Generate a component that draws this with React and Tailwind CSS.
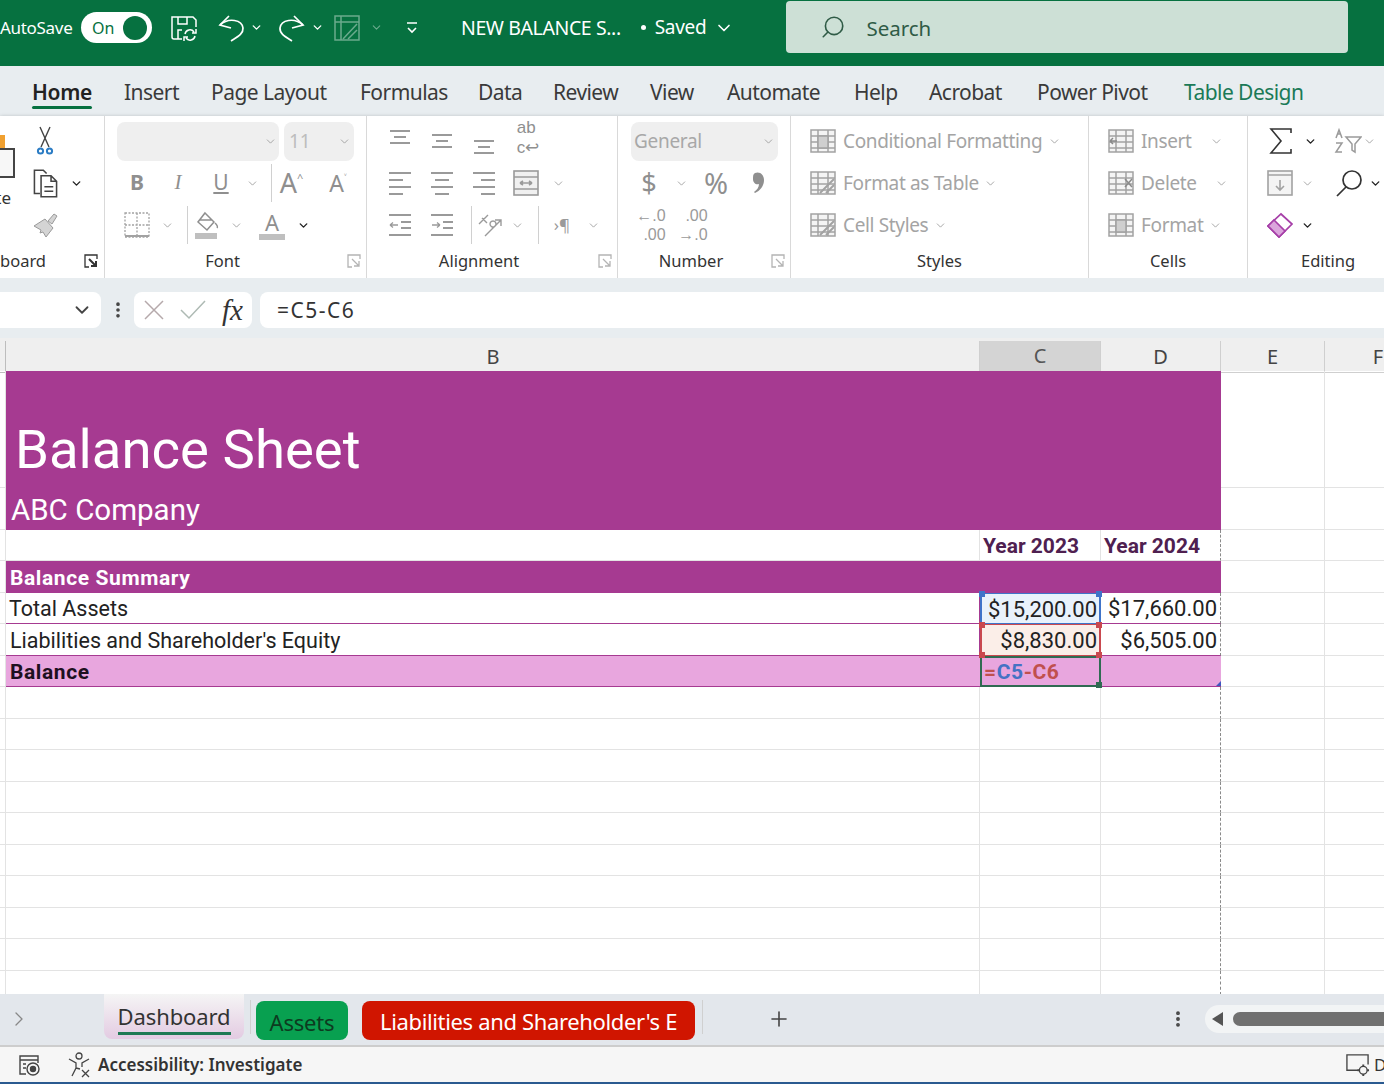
import React from "react";
import {
  ChevronDown,
  ChevronRight,
  EllipsisVertical,
  Plus,
  Search,
} from "lucide-react";

// one fixed-width cell of a ribbon row, centres whatever is inside
const S = ({ c = "", children }) => (
  <span className={"flex flex-none items-center justify-center " + c}>{children}</span>
);

const Chev = ({ dark }) => (
  <ChevronDown size={13} strokeWidth={dark ? 2.6 : 1.7} color={dark ? "#222" : "#a0a0a0"} />
);

const Sep = ({ c = "" }) => <span className={"w-px flex-none bg-[#d0d0d0] " + c} />;

const Lines = ({ rows, children }) => (
  <svg width="26" height="26" viewBox="0 0 26 26" fill="none" stroke="#9a9a9a" strokeWidth="2">
    {rows.map((r, i) => (
      <line key={i} x1={r[0]} x2={r[1]} y1={r[2]} y2={r[2]} />
    ))}
    {children}
  </svg>
);

const Launcher = ({ dark }) => (
  <svg width="14" height="14" viewBox="0 0 14 14" fill="none" stroke={dark ? "#333" : "#b4b4b4"} strokeWidth="1.3">
    <path d="M13 5V1H1v12h4" />
    <path d="M5 5l7 7M12 7v5H7" strokeWidth={dark ? 2 : 1.3} />
  </svg>
);

const GridIcon = ({ children }) => (
  <svg width="26" height="26" viewBox="0 0 26 26" fill="none" stroke="#a2a2a2" strokeWidth="1.5">
    <rect x="1" y="2" width="24" height="22" fill="#f4f4f4" />
    <path d="M1 8h24M1 14h24M1 20h24M8 2v22M18 2v22" />
    {children}
  </svg>
);

const Group = ({ w, label, launcher, dark, children }) => (
  <div className={"flex h-full flex-none flex-col border-r border-[#d9d9d9] " + w}>
    <div className="flex h-[131px] flex-col pt-[4px]">{children}</div>
    <div
      className={
        "relative flex h-[28px] items-center justify-center text-[16.5px] text-[#333] " +
        (launcher ? "pr-[26px]" : "")
      }
    >
      {label}
      {launcher && (
        <span className="absolute right-[5px] top-[7px]">
          <Launcher dark={dark} />
        </span>
      )}
    </div>
  </div>
);

const RRow = ({ children }) => <div className="flex h-[42px] flex-none items-center">{children}</div>;

const tabs = [
  ["Home", "w-[92px] pl-[32px]"],
  ["Insert", "w-[119px] pl-[32px]"],
  ["Page Layout", "w-[149px] pl-[0px]"],
  ["Formulas", "w-[118px] pl-[0px]"],
  ["Data", "w-[75px] pl-[0px]"],
  ["Review", "w-[97px] pl-[0px]"],
  ["View", "w-[77px] pl-[0px]"],
  ["Automate", "w-[127px] pl-[0px]"],
  ["Help", "w-[75px] pl-[0px]"],
  ["Acrobat", "w-[108px] pl-[0px]"],
  ["Power Pivot", "w-[147px] pl-[0px]"],
];

const emptyRows = [
  "h-[32px]", "h-[31px]", "h-[32px]", "h-[31px]", "h-[32px]",
  "h-[31px]", "h-[32px]", "h-[31px]", "h-[32px]", "h-[24px]",
];

const gridCols = "grid grid-cols-[6px_974px_121px_120px_104px_60px]";
const line = "border-b border-r border-[#e3e3e3]";
const dashed = "border-b border-r border-b-[#e3e3e3] border-r-[#8a8a8a] [border-right-style:dashed]";

const Handle = ({ c }) => <span className={"absolute z-10 h-[6px] w-[6px] " + c} />;

const UndoIcon = ({ flip }) => (
  <svg
    width="28"
    height="28"
    viewBox="0 0 28 28"
    fill="none"
    stroke="#fff"
    strokeWidth="1.7"
    className={flip ? "-scale-x-100" : ""}
  >
    <path d="M12 2L3 11l11 3" />
    <path d="M3 11C12 3 25 6 26 14c.5 6-6 9-12 13" />
  </svg>
);

export default function App() {
  return (
    <div
      className="flex h-[1084px] w-[1384px] flex-col overflow-hidden bg-white text-[#333]"
      style={{ fontFamily: '"Noto Sans", "Open Sans", sans-serif' }}
    >
      {/* title bar */}
      <div className="flex h-[66px] flex-none items-start bg-[#067140] text-white">
        <div className="flex h-[55px] items-center">
          <span className="w-[81px] text-[17px] tracking-[-0.3px]">AutoSave</span>
          <span className="flex h-[31px] w-[71px] items-center justify-between rounded-full bg-white pl-[11px] pr-[5px] text-[16px] text-[#067140]">
            On
            <span className="h-[24px] w-[24px] rounded-full bg-[#067140]" />
          </span>
          <S c="ml-[18px] w-[28px]">
            <svg width="28" height="28" viewBox="0 0 28 28" fill="none" stroke="#fff" strokeWidth="1.5">
              <path d="M12 25H4a2 2 0 0 1-2-2V3h21l3 3v7" />
              <path d="M8 3v7h9V3M8 25v-9h4" />
              <path d="M15 20a5 5 0 0 1 9-2m2-3v4h-4M25 22a5 5 0 0 1-9 2m-2 3v-4h4" />
            </svg>
          </S>
          <S c="ml-[19px] w-[28px]">
            <UndoIcon />
          </S>
          <S c="ml-[4px] w-[14px]">
            <ChevronDown size={13} strokeWidth={2.5} color="#fff" />
          </S>
          <S c="ml-[15px] w-[28px]">
            <UndoIcon flip />
          </S>
          <S c="ml-[4px] w-[14px]">
            <ChevronDown size={13} strokeWidth={2.5} color="#fff" />
          </S>
          <S c="ml-[9px] w-[28px] opacity-40">
            <svg width="28" height="28" viewBox="0 0 28 28" fill="none" stroke="#fff" strokeWidth="1.5">
              <rect x="2" y="2" width="24" height="24" />
              <path d="M2 8h24M8 2v24M10 25L24 10M15 25l9-9" />
            </svg>
          </S>
          <S c="ml-[8px] w-[14px] opacity-40">
            <ChevronDown size={13} strokeWidth={2} color="#fff" />
          </S>
          <S c="ml-[22px] w-[14px]">
            <svg width="14" height="14" viewBox="0 0 14 14" fill="none" stroke="#fff" strokeWidth="1.6">
              <path d="M2 2h10M3 7l4 4 4-4" />
            </svg>
          </S>
          <span className="ml-[42px] text-[19.5px] tracking-[-0.4px]">NEW BALANCE S...</span>
          <span className="ml-[20px] h-[5px] w-[5px] rounded-full bg-white" />
          <span className="ml-[9px] text-[19px] tracking-[-0.3px]">Saved</span>
          <S c="ml-[8px] w-[20px]">
            <ChevronDown size={24} strokeWidth={2} color="#fff" />
          </S>
        </div>
        <div className="ml-[52px] mt-[1px] flex h-[52px] w-[562px] items-center rounded-[4px] bg-[#cde0d6] pl-[34px] text-[20.5px] text-[#2f5b46]">
          <Search size={26} strokeWidth={1.5} color="#2f5b46" className="-scale-x-100" />
          <span className="ml-[20px] pt-[2px]">Search</span>
        </div>
      </div>

      {/* tabs */}
      <div className="flex h-[50px] flex-none items-center bg-[#e8edf0] pt-[4px] text-[21px] text-[#3a3a3a]">
        {tabs.map(([name, w], i) => (
          <span key={name} className={"flex-none tracking-[-0.55px] " + w}>
            <span className={i === 0 ? "relative font-semibold tracking-[-0.3px] text-[#222]" : ""}>
              {name}
              {i === 0 && (
                <span className="absolute -bottom-[3px] left-0 right-0 h-[3px] rounded bg-[#067140]" />
              )}
            </span>
          </span>
        ))}
        <span className="tracking-[-0.55px] text-[#1b7a57]">Table Design</span>
      </div>

      {/* ribbon */}
      <div className="flex h-[162px] flex-none overflow-hidden bg-white shadow-[0_1px_4px_rgba(0,0,0,0.3)]">
        {/* clipboard */}
        <div className="flex h-full w-[105px] flex-none flex-col border-r border-[#d9d9d9]">
          <div className="flex h-[131px] pt-[4px]">
            <div className="flex w-[30px] flex-none flex-col">
              <div className="mt-[15px] h-[13px] w-[5px] bg-[#f0a030]" />
              <div className="h-[30px] w-[15px] border-2 border-l-0 border-[#444] bg-[#f7f7f7]" />
              <div className="mt-[8px] flex w-[11px] justify-end overflow-hidden text-[17px] leading-[24px]">
                <span>Paste</span>
              </div>
            </div>
            <div className="flex flex-col">
              <RRow>
                <S c="w-[30px]">
                  <svg width="22" height="30" viewBox="0 0 22 30" fill="none" stroke="#444" strokeWidth="1.4">
                    <path d="M6 1l9 20M16 1L7 21" />
                    <circle cx="6.5" cy="25" r="2.6" stroke="#2b7cc4" strokeWidth="2" />
                    <circle cx="15.5" cy="25" r="2.6" stroke="#2b7cc4" strokeWidth="2" />
                  </svg>
                </S>
              </RRow>
              <RRow>
                <S c="w-[30px]">
                  <svg width="29" height="31" viewBox="0 0 26 28" fill="none" stroke="#444" strokeWidth="1.4">
                    <path d="M8 23H3V2h8l3 3" />
                    <path d="M9 7h9l5 5v14H9zM18 7v5h5M12 17h8M12 21h8" />
                  </svg>
                </S>
                <S c="ml-[6px] w-[20px]">
                  <Chev dark />
                </S>
              </RRow>
              <RRow>
                <S c="w-[32px]">
                  <svg width="26" height="26" viewBox="0 0 26 26" fill="#d4d4d4" stroke="#9a9a9a" strokeWidth="1">
                    <path d="M15 9l6-7 3 2-5 8zM1 14l11-7 8 9-7 9-3-5-3 1 1-3z" />
                  </svg>
                </S>
              </RRow>
            </div>
          </div>
          <div className="relative flex h-[28px] items-center text-[16.5px]">
            <span>board</span>
            <span className="absolute left-[84px] top-[7px]">
              <Launcher dark />
            </span>
          </div>
        </div>

        {/* font */}
        <Group w="w-[262px]" label="Font" launcher>
          <RRow>
            <span className="ml-[12px] flex h-[39px] w-[162px] items-center justify-end rounded-lg bg-[#efefef] pr-[2px]">
              <Chev />
            </span>
            <span className="ml-[5px] flex h-[39px] w-[70px] items-center justify-between rounded-lg bg-[#efefef] pl-[5px] pr-[3px] text-[19px] text-[#bdbdbd]">
              11
              <Chev />
            </span>
          </RRow>
          <RRow>
            <S c="ml-[12px] w-[40px] text-[21px] font-bold text-[#8f8f8f]">B</S>
            <S c="w-[42px] text-[21px] italic text-[#8f8f8f]">
              <span style={{ fontFamily: '"Liberation Serif", serif' }}>I</span>
            </S>
            <S c="w-[44px] text-[21px] text-[#8f8f8f] underline">U</S>
            <S c="w-[18px]">
              <Chev />
            </S>
            <Sep c="ml-[10px] h-[38px]" />
            <S c="w-[39px] text-[27px] text-[#8f8f8f]">
              A<sup className="text-[11px]">^</sup>
            </S>
            <S c="ml-[5px] w-[44px] text-[23px] text-[#8f8f8f]">
              A<sup className="text-[10px]">˅</sup>
            </S>
          </RRow>
          <RRow>
            <S c="ml-[19px] w-[26px]">
              <svg width="26" height="26" viewBox="0 0 26 26" fill="none" stroke="#a2a2a2" strokeWidth="1.3">
                <rect x="1" y="1" width="24" height="24" strokeDasharray="2 1.5" />
                <path d="M13 1v24M1 13h24" strokeDasharray="2 1.5" />
                <path d="M1 24h24" strokeWidth="2" strokeDasharray="none" />
              </svg>
            </S>
            <S c="ml-[10px] w-[14px]">
              <Chev />
            </S>
            <Sep c="ml-[13px] h-[38px]" />
            <S c="ml-[6px] w-[26px]">
              <svg width="26" height="28" viewBox="0 0 26 28" fill="none" stroke="#8f8f8f" strokeWidth="1.5">
                <path d="M11 2l9 9-7 8-9-8zM6 9h12M21 12c2 2 3 4 2 5" />
                <rect x="1" y="22" width="22" height="6" fill="#bfbfbf" stroke="none" />
              </svg>
            </S>
            <S c="ml-[9px] w-[14px]">
              <Chev />
            </S>
            <S c="ml-[16px] w-[26px]">
              <span className="flex flex-col items-center text-[22px] leading-[22px] text-[#8f8f8f]">
                A
                <span className="mt-[1px] h-[6px] w-[26px] bg-[#bfbfbf]" />
              </span>
            </S>
            <S c="ml-[11px] w-[14px]">
              <Chev dark />
            </S>
          </RRow>
        </Group>

        {/* alignment */}
        <Group w="w-[251px]" label="Alignment" launcher>
          <RRow>
            <S c="ml-[20px] w-[26px]">
              <Lines rows={[[3, 23, 3], [7, 19, 9], [3, 23, 15]]} />
            </S>
            <S c="ml-[16px] w-[26px]">
              <Lines rows={[[3, 23, 7], [7, 19, 13], [3, 23, 19]]} />
            </S>
            <S c="ml-[16px] w-[26px]">
              <Lines rows={[[3, 23, 13], [7, 19, 19], [3, 23, 25]]} />
            </S>
            <S c="ml-[18px] w-[26px] text-[17px] leading-[20px] text-[#8f8f8f]">
              <span className="-mt-[6px]" style={{ fontFamily: '"Liberation Sans", sans-serif' }}>
                ab
                <br />
                c↩
              </span>
            </S>
          </RRow>
          <RRow>
            <S c="ml-[20px] w-[26px]">
              <Lines rows={[[2, 24, 3], [2, 16, 10], [2, 24, 17], [2, 16, 24]]} />
            </S>
            <S c="ml-[16px] w-[26px]">
              <Lines rows={[[2, 24, 3], [6, 20, 10], [2, 24, 17], [6, 20, 24]]} />
            </S>
            <S c="ml-[16px] w-[26px]">
              <Lines rows={[[2, 24, 3], [10, 24, 10], [2, 24, 17], [10, 24, 24]]} />
            </S>
            <S c="ml-[16px] w-[26px]">
              <svg width="26" height="26" viewBox="0 0 26 26" fill="#f0f0f0" stroke="#9a9a9a" strokeWidth="1.6">
                <rect x="1" y="1" width="24" height="24" />
                <path d="M1 7h24M1 19h24M7 13h12M7 13l3-2M7 13l3 2M19 13l-3-2M19 13l-3 2" />
              </svg>
            </S>
            <S c="ml-[12px] w-[14px]">
              <Chev />
            </S>
          </RRow>
          <RRow>
            <S c="ml-[20px] w-[26px]">
              <Lines rows={[[2, 24, 3], [14, 24, 10], [14, 24, 16], [2, 24, 23]]}>
                <path d="M11 13H3M3 13l3-2.5M3 13l3 2.5" strokeWidth="1.3" />
              </Lines>
            </S>
            <S c="ml-[16px] w-[26px]">
              <Lines rows={[[2, 24, 3], [14, 24, 10], [14, 24, 16], [2, 24, 23]]}>
                <path d="M3 13h8M11 13l-3-2.5M11 13l-3 2.5" strokeWidth="1.3" />
              </Lines>
            </S>
            <Sep c="ml-[16px] h-[38px]" />
            <S c="ml-[5px] w-[26px]">
              <svg width="26" height="26" viewBox="0 0 26 26" fill="none" stroke="#9a9a9a" strokeWidth="1.4">
                <path d="M8 24L24 8M18 8h6v6M2 12l9-9M5 6l5 5M13 12a3 3 0 1 0 0-.1" />
              </svg>
            </S>
            <S c="ml-[7px] w-[14px]">
              <Chev />
            </S>
            <Sep c="ml-[14px] h-[38px]" />
            <S c="ml-[10px] w-[26px] text-[17px] text-[#9a9a9a]">›¶</S>
            <S c="ml-[11px] w-[14px]">
              <Chev />
            </S>
          </RRow>
        </Group>

        {/* number */}
        <Group w="w-[173px]" label="Number" launcher>
          <RRow>
            <span className="ml-[13px] flex h-[39px] w-[147px] items-center justify-between rounded-lg bg-[#efefef] pl-[3px] pr-[3px] text-[19px] tracking-[-0.3px] text-[#a8a8a8]">
              General
              <Chev />
            </span>
          </RRow>
          <RRow>
            <S c="ml-[18px] w-[26px] text-[27px] text-[#8f8f8f]">$</S>
            <S c="ml-[12px] w-[14px]">
              <Chev />
            </S>
            <S c="ml-[13px] w-[30px] text-[29px] text-[#8f8f8f]">%</S>
            <S c="ml-[15px] w-[26px]">
              <svg width="14" height="24" viewBox="0 0 14 24" fill="#8f8f8f">
                <path d="M3 2c5-2 9 2 9 7 0 6-4 11-9 13l-1-1c3-2 5-5 5-8-3 1-6-1-6-5 0-3 0-5 2-6z" />
              </svg>
            </S>
          </RRow>
          <RRow>
            <S c="ml-[20px] w-[26px] text-right text-[16px] leading-[19px] text-[#9a9a9a]">
              <span style={{ fontFamily: '"Liberation Sans", sans-serif' }}>
                ←.0
                <br />
                .00
              </span>
            </S>
            <S c="ml-[16px] w-[26px] text-right text-[16px] leading-[19px] text-[#9a9a9a]">
              <span style={{ fontFamily: '"Liberation Sans", sans-serif' }}>
                .00
                <br />
                →.0
              </span>
            </S>
          </RRow>
        </Group>

        {/* styles */}
        <Group w="w-[298px]" label="Styles">
          {["Conditional Formatting", "Format as Table", "Cell Styles"].map((t, i) => (
            <RRow key={t}>
              <S c="ml-[19px] w-[26px]">
                <GridIcon>
                  {i > 0 ? (
                    <path d="M10 23L24 9M16 23l8-8" strokeWidth="2" />
                  ) : (
                    <rect x="8" y="8" width="10" height="12" fill="#cfcfcf" />
                  )}
                </GridIcon>
              </S>
              <span className="ml-[7px] pt-[1px] text-[19px] tracking-[-0.35px] text-[#a4a4a4]">{t}</span>
              <S c="ml-[5px] w-[14px]">
                <Chev />
              </S>
            </RRow>
          ))}
        </Group>

        {/* cells */}
        <Group w="w-[159px]" label="Cells">
          <RRow>
            <S c="ml-[19px] w-[26px]">
              <GridIcon>
                <path d="M9 13H2M2 13l3-3M2 13l3 3" fill="none" stroke="#8a8a8a" />
              </GridIcon>
            </S>
            <span className="ml-[7px] pt-[1px] text-[19px] tracking-[-0.35px] text-[#a4a4a4]">Insert</span>
            <S c="ml-[18px] w-[14px]">
              <Chev />
            </S>
          </RRow>
          <RRow>
            <S c="ml-[19px] w-[26px]">
              <GridIcon>
                <path d="M17 9l7 8M24 9l-7 8" stroke="#8a8a8a" />
              </GridIcon>
            </S>
            <span className="ml-[7px] pt-[1px] text-[19px] tracking-[-0.35px] text-[#a4a4a4]">Delete</span>
            <S c="ml-[18px] w-[14px]">
              <Chev />
            </S>
          </RRow>
          <RRow>
            <S c="ml-[19px] w-[26px]">
              <GridIcon>
                <rect x="8" y="8" width="10" height="12" fill="#cfcfcf" />
              </GridIcon>
            </S>
            <span className="ml-[7px] pt-[1px] text-[19px] tracking-[-0.35px] text-[#a4a4a4]">Format</span>
            <S c="ml-[5px] w-[14px]">
              <Chev />
            </S>
          </RRow>
        </Group>

        {/* editing */}
        <div className="flex h-full flex-1 flex-col">
          <div className="flex h-[131px] flex-col pt-[4px]">
            <RRow>
              <S c="ml-[20px] w-[26px]">
                <svg width="24" height="28" viewBox="0 0 24 28" fill="none" stroke="#333" strokeWidth="1.6">
                  <path d="M22 6V2H2l10 12L2 26h20v-4" />
                </svg>
              </S>
              <S c="ml-[9px] w-[14px]">
                <Chev dark />
              </S>
              <S c="ml-[17px] w-[28px]">
                <svg width="28" height="28" viewBox="0 0 28 28" fill="none" stroke="#9a9a9a" strokeWidth="1.5">
                  <path d="M12 10H27l-6 7v8l-3-2v-6zM2 11l3-8 3 8M3 7h4M2 16h6l-6 9h6" />
                </svg>
              </S>
              <S c="w-[14px]">
                <Chev />
              </S>
            </RRow>
            <RRow>
              <S c="ml-[19px] w-[26px]">
                <svg width="26" height="26" viewBox="0 0 26 26" fill="#f4f4f4" stroke="#a2a2a2" strokeWidth="1.6">
                  <rect x="1" y="1" width="24" height="24" />
                  <path d="M1 5h24M13 10v10M9 16l4 4 4-4" fill="none" />
                </svg>
              </S>
              <S c="ml-[7px] w-[14px]">
                <Chev />
              </S>
              <S c="ml-[21px] w-[28px]">
                <svg width="28" height="28" viewBox="0 0 28 28" fill="none" stroke="#333" strokeWidth="1.7">
                  <circle cx="17" cy="11" r="9" />
                  <path d="M11 18L2 27" />
                </svg>
              </S>
              <S c="ml-[5px] w-[14px]">
                <Chev dark />
              </S>
            </RRow>
            <RRow>
              <S c="ml-[19px] w-[26px]">
                <svg width="26" height="26" viewBox="0 0 26 26" stroke="#a63fa8" strokeWidth="1.7">
                  <path d="M14 2L25 12 12 25 1 14z" fill="#fff" />
                  <path d="M7 8l11 11-6 6L1 14z" fill="#dba5dc" />
                </svg>
              </S>
              <S c="ml-[7px] w-[14px]">
                <Chev dark />
              </S>
            </RRow>
          </div>
          <div className="flex h-[28px] items-center pl-[53px] text-[16.5px]">Editing</div>
        </div>
      </div>

      {/* formula bar */}
      <div className="flex h-[60px] flex-none items-center bg-[#e8edf0] pt-[4px]">
        <div className="flex h-[36px] w-[101px] flex-none items-center justify-end rounded-r-lg bg-white pr-[8px]">
          <ChevronDown size={22} strokeWidth={2} color="#444" />
        </div>
        <S c="w-[33px]">
          <EllipsisVertical size={20} strokeWidth={2.4} color="#444" />
        </S>
        <div className="flex h-[36px] w-[118px] flex-none items-center rounded-lg bg-white">
          <S c="ml-[6px] w-[28px]">
            <svg width="22" height="22" viewBox="0 0 22 22" stroke="#b5a9ab" strokeWidth="1.5">
              <path d="M2 2l18 18M20 2L2 20" />
            </svg>
          </S>
          <S c="ml-[11px] w-[28px]">
            <svg width="28" height="22" viewBox="0 0 28 22" fill="none" stroke="#aebab4" strokeWidth="1.5">
              <path d="M2 11l8 8L26 2" />
            </svg>
          </S>
          <span
            className="ml-[15px] text-[29px] italic leading-none text-[#333]"
            style={{ fontFamily: '"Liberation Serif", serif' }}
          >
            fx
          </span>
        </div>
        <div className="ml-[8px] flex h-[36px] flex-1 items-center rounded-l-lg bg-white pl-[17px] pt-[2px] text-[21px] tracking-[1.5px]">
          =C5-C6
        </div>
      </div>

      {/* column headers */}
      <div className={gridCols + " h-[33px] flex-none bg-[#efefef] pt-[3px] text-[20px] text-[#444]"}>
        <div className="border-b border-r border-[#bdbdbd]" />
        <div className="flex items-center justify-center border-b border-r border-[#cfcfcf] pl-[1px]">B</div>
        <div className="flex items-center justify-center border-b-2 border-r border-b-[#067140] border-r-[#cfcfcf] bg-[#d4d4d4] text-[#555]">C</div>
        <div className="flex items-center justify-center border-b border-r border-[#cfcfcf]">D</div>
        <div className="flex items-center justify-center border-b border-r border-[#cfcfcf]">E</div>
        <div className="flex items-center justify-center border-b border-[#cfcfcf] pl-[46px]">F</div>
      </div>

      {/* sheet */}
      <div className="flex min-h-0 flex-1 flex-col overflow-hidden" style={{ fontFamily: 'Roboto, "Noto Sans", sans-serif' }}>
        <div className={gridCols + " h-[117px] flex-none"}>
          <div className={line} />
          <div className="col-span-3 flex items-end bg-[#a63a91] pb-[7px] pl-[9px] text-[54.5px] leading-[64px] text-white">
            Balance Sheet
          </div>
          <div className={line} />
          <div className="border-b border-[#e3e3e3]" />
        </div>
        <div className={gridCols + " h-[42px] flex-none"}>
          <div className={line} />
          <div className="col-span-3 flex items-center bg-[#a63a91] pl-[5px] pt-[2px] text-[29.5px] leading-[36px] text-white">
            ABC Company
          </div>
          <div className={line} />
          <div className="border-b border-[#e3e3e3]" />
        </div>
        <div className={gridCols + " h-[31px] flex-none text-[21px] font-bold leading-[26px] text-[#4f2050]"}>
          <div className={line} />
          <div className={line} />
          <div className={line + " flex items-center pl-[3px] pt-[2px]"}>Year 2023</div>
          <div className={dashed + " flex items-center pl-[3px] pt-[2px]"}>Year 2024</div>
          <div className={line} />
          <div className="border-b border-[#e3e3e3]" />
        </div>
        <div className={gridCols + " h-[32px] flex-none"}>
          <div className={line} />
          <div className="col-span-3 flex items-center bg-[#a63a91] pl-[4px] pt-[2px] text-[21px] font-bold leading-[26px] tracking-[0.6px] text-white">
            Balance Summary
          </div>
          <div className={line} />
          <div className="border-b border-[#e3e3e3]" />
        </div>
        <div className={gridCols + " h-[31px] flex-none text-[22px] leading-[26px] text-[#222]"}>
          <div className={line} />
          <div className="flex items-center border-b border-r border-[#a63a91] pl-[3px] pt-[2px] text-[21.5px]">Total Assets</div>
          <div className="relative flex items-center justify-end border-x-2 border-y border-[#3f74c9] bg-[#e9f2fb] pr-[2px] pt-[2px]">
            $15,200.00
            <Handle c="-left-[3px] -top-[3px] bg-[#3f74c9]" />
            <Handle c="-right-[3px] -top-[3px] bg-[#3f74c9]" />
          </div>
          <div className="flex items-center justify-end border-b border-r border-b-[#a63a91] border-r-[#8a8a8a] pr-[3px] pt-[2px] [border-right-style:dashed]">$17,660.00</div>
          <div className={line} />
          <div className="border-b border-[#e3e3e3]" />
        </div>
        <div className={gridCols + " h-[32px] flex-none text-[22px] leading-[26px] text-[#222]"}>
          <div className={line} />
          <div className="flex items-center border-b border-r border-[#a63a91] pl-[4px] pt-[2px] text-[21.5px]">Liabilities and Shareholder's Equity</div>
          <div className="relative flex items-center justify-end border-x-2 border-y border-[#c9494f] bg-[#fbeee8] pr-[2px] pt-[2px]">
            $8,830.00
            <Handle c="-left-[3px] -top-[3px] bg-[#c9494f]" />
            <Handle c="-right-[3px] -top-[3px] bg-[#c9494f]" />
            <Handle c="-left-[3px] -bottom-[3px] bg-[#c9494f]" />
            <Handle c="-right-[3px] -bottom-[3px] bg-[#c9494f]" />
          </div>
          <div className="flex items-center justify-end border-b border-r border-b-[#a63a91] border-r-[#8a8a8a] pr-[3px] pt-[2px] [border-right-style:dashed]">$6,505.00</div>
          <div className={line} />
          <div className="border-b border-[#e3e3e3]" />
        </div>
        <div className={gridCols + " h-[31px] flex-none text-[21px] font-bold leading-[26px] tracking-[0.6px]"}>
          <div className={line} />
          <div className="flex items-center border-b border-[#a63a91] bg-[#e8a6de] pl-[4px] pt-[2px] text-[#1d1020]">Balance</div>
          <div className="relative flex items-center border-2 border-[#2f6b52] bg-[#e8a6de] pl-[2px] text-[#c0504d]">
            <span>=</span>
            <span className="text-[#4472c4]">C5</span>
            <span>-</span>
            <span>C6</span>
            <Handle c="-right-[3px] -bottom-[3px] bg-[#2f6b52]" />
          </div>
          <div className="relative border-b border-[#a63a91] bg-[#e8a6de]">
            <span className="absolute bottom-0 right-0 h-[5px] w-[5px] bg-[#3f57c0] [clip-path:polygon(100%_0,100%_100%,0_100%)]" />
          </div>
          <div className={line} />
          <div className="border-b border-[#e3e3e3]" />
        </div>
        {emptyRows.map((h, i) => (
          <div key={i} className={gridCols + " flex-none " + h}>
            <div className={line} />
            <div className={line} />
            <div className={line} />
            <div className={dashed} />
            <div className={line} />
            <div className="border-b border-[#e3e3e3]" />
          </div>
        ))}
      </div>

      {/* sheet tabs */}
      <div className="flex h-[53px] flex-none items-start border-b-2 border-[#cdcdcd] bg-[#e3e7ec]">
        <S c="h-[50px] w-[37px]">
          <ChevronRight size={24} strokeWidth={1.3} color="#888" />
        </S>
        <div className="ml-[67px] flex h-[45px] w-[140px] flex-none items-center justify-center rounded-b-lg bg-gradient-to-b from-[#f5f5f5] to-[#e3cbe2] text-[22px] text-[#333]">
          <span className="relative tracking-[-0.1px]">
            Dashboard
            <span className="absolute -bottom-[2px] left-0 right-0 h-[3px] bg-[#1f7a54]" />
          </span>
        </div>
        <Sep c="ml-[6px] mt-[6px] h-[34px]" />
        <div className="ml-[5px] mt-[7px] flex h-[39px] w-[92px] flex-none items-center justify-center rounded-lg bg-[#08a050] pt-[4px] text-[22px] tracking-[-0.2px] text-[#0d3b20]">
          Assets
        </div>
        <div className="ml-[14px] mt-[7px] flex h-[39px] w-[333px] flex-none items-center justify-center rounded-lg bg-[#d01500] pt-[2px] text-[22px] tracking-[-0.35px] text-white">
          Liabilities and Shareholder's E
        </div>
        <Sep c="ml-[7px] mt-[6px] h-[34px]" />
        <S c="ml-[64px] h-[50px] w-[24px]">
          <Plus size={24} strokeWidth={1.6} color="#444" />
        </S>
        <S c="ml-[377px] h-[50px] w-[20px]">
          <EllipsisVertical size={20} strokeWidth={2.6} color="#444" />
        </S>
        <div className="ml-[17px] mt-[11px] flex h-[28px] flex-1 items-center rounded-l-full bg-[#f2f4f5] pl-[7px]">
          <span className="h-0 w-0 border-y-[7px] border-r-[11px] border-y-transparent border-r-[#555]" />
          <span className="ml-[10px] h-[14px] flex-1 rounded-l-full bg-[#707070]" />
        </div>
      </div>

      {/* status bar */}
      <div className="flex h-[35px] flex-none items-center bg-[#f6f6f6] text-[17px] font-semibold text-[#333]">
        <S c="ml-[18px] w-[24px]">
          <svg width="24" height="24" viewBox="0 0 24 24" fill="none" stroke="#444" strokeWidth="1.4">
            <path d="M8 21H2V3h18v7M2 7h18M5 11h3M5 15h3" />
            <circle cx="15" cy="16" r="6" />
            <circle cx="15" cy="16" r="2.5" fill="#444" />
          </svg>
        </S>
        <S c="ml-[25px] w-[26px]">
          <svg width="26" height="26" viewBox="0 0 26 26" fill="none" stroke="#444" strokeWidth="1.3">
            <circle cx="12" cy="4" r="3" />
            <path d="M2 7l7 4v5l-4 8M22 7l-7 4v4M9 16l4 1M15 18l7 7M22 18l-7 7" />
          </svg>
        </S>
        <span className="ml-[5px]">Accessibility: Investigate</span>
        <div className="ml-auto flex items-center">
          <svg width="25" height="25" viewBox="0 0 26 26" fill="none" stroke="#444" strokeWidth="1.4">
            <path d="M14 19H2V3h22v10" />
            <circle cx="19" cy="19" r="4" />
            <path d="M19 13v2M19 23v2M13 19h2M23 19h2" strokeWidth="2" />
          </svg>
          <span className="ml-[4px] w-[10px] overflow-hidden font-normal">D</span>
        </div>
      </div>
      <div className="h-[2px] flex-none bg-[#2a5a90]" />
    </div>
  );
}
